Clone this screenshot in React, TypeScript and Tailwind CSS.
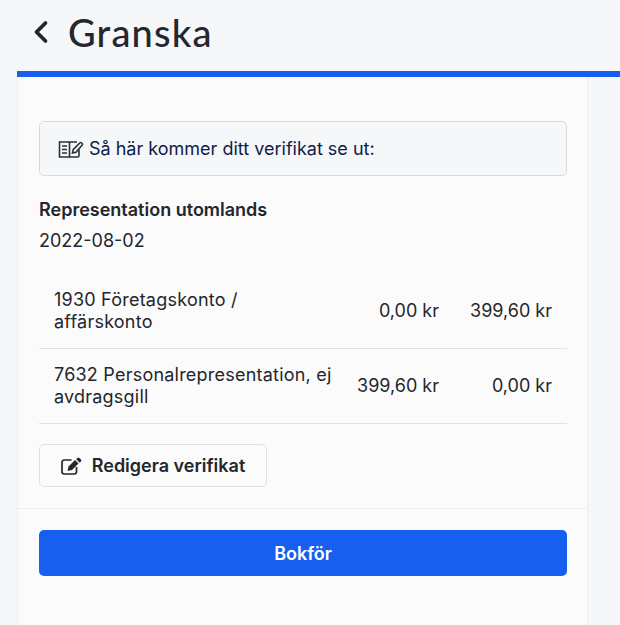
import { ChevronLeft } from 'lucide-react';

const rows = [
  { name: '1930 Företagskonto / affärskonto', debit: '0,00 kr', credit: '399,60 kr' },
  { name: '7632 Personalrepresentation, ej avdragsgill', debit: '399,60 kr', credit: '0,00 kr' },
];

function BookIcon() {
  return (
    <svg width="26" height="18" viewBox="0 0 26 18" fill="none" stroke="#2b2f36" strokeWidth="1.6" className="shrink-0">
      <path d="M19 2H1.500v15h18c1 0 1.500-.5 1.500-1.500V9.500" />
      <path d="M11.500 2v15" />
      <path d="M4 6h5M4 9.500h5M4 13h5" />
      <path d="M14.500 13l.8-3.500L22 2.800a1 1 0 0 1 1.500 0l.7.7a1 1 0 0 1 0 1.500L18 12.200z" />
    </svg>
  );
}

function EditIcon() {
  return (
    <svg width="21" height="18" viewBox="0 0 21 18" fill="none" className="shrink-0">
      <path d="M10.500 3H3.200a2.200 2.200 0 0 0-2.200 2.200v9.600A2.200 2.200 0 0 0 3.200 17h10.100a2.200 2.200 0 0 0 2.200-2.200V10" stroke="#24262b" strokeWidth="1.700" />
      <path d="M7.500 9.500l-1 4.500 4.500-1 6.500-6.500-3.500-3.500z" fill="#24262b" />
      <path d="M15.200 2.200l3.500 3.500 1.200-1.200a1.300 1.300 0 0 0 0-1.900L18.300 1a1.300 1.300 0 0 0-1.900 0z" fill="#24262b" />
    </svg>
  );
}

export default function App() {
  return (
    <div className="h-[625px] w-[620px] overflow-hidden bg-[#f6f7f9] pl-[17px] font-['Inter',sans-serif] text-[#24262b]">
      <div className="flex h-[71px] items-center pb-[7px] pl-[6px]">
        <ChevronLeft className="h-[36px] w-[36px] text-[#22252b]" strokeWidth={2.5} />
        <h1 className="ml-[9px] font-['Lato',sans-serif] text-[38px] leading-none font-medium tracking-[1.2px] text-[#24272e]">Granska</h1>
      </div>
      <div className="h-[6px] bg-[#175fef]" />
      <div className="h-[548px] w-[571px] border-r border-l border-[#eceef1] bg-[#fbfbfc]">
        <div className="pt-[44px] pr-[20px] pl-[21px]">
          <div className="flex h-[55px] items-center gap-[5px] rounded-[5px] border border-[#d9dadd] bg-[#f6f7f9] pl-[18px] text-[18px] text-[#101c4a]">
            <BookIcon />
            <span>Så här kommer ditt verifikat se ut:</span>
          </div>
          <h2 className="mt-[22px] text-[18px] leading-[24px] font-semibold">Representation utomlands</h2>
          <p className="mt-[7px] text-[18px] leading-[24px]">2022-08-02</p>
          <div className="mt-[21px]">
            {rows.map((row) => (
              <div key={row.name} className="flex h-[75px] items-center border-b border-[#dfe1e5] pl-[15px] text-[18px] leading-[22px]">
                <div className="w-[284px] tracking-[0.22px]">{row.name}</div>
                <div className="w-[101px] text-right">{row.debit}</div>
                <div className="w-[113px] text-right">{row.credit}</div>
              </div>
            ))}
          </div>
          <button className="mt-[20px] flex h-[43px] w-[228px] items-center justify-center gap-[10px] rounded-[5px] border border-[#dfe1e5] text-[18px] font-semibold">
            <EditIcon />
            Redigera verifikat
          </button>
        </div>
        <div className="mt-[21px] border-t border-[#eceef1] pt-[21px] pr-[20px] pl-[21px]">
          <button className="h-[46px] w-full rounded-[5px] bg-[#175fef] text-[18px] font-semibold text-white">Bokför</button>
        </div>
      </div>
    </div>
  );
}
